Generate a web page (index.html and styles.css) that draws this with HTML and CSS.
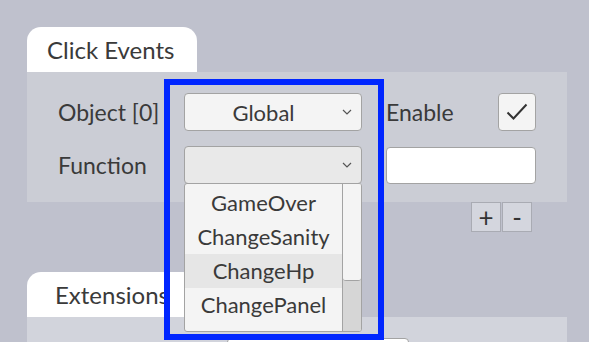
FILE: index.html
```html
<!DOCTYPE html>
<html lang="en">
<head>
  <meta charset="UTF-8">
  <title>Click Events</title>
  <link rel="stylesheet" href="styles.css">
</head>
<body>
  <div class="inspector">
    <div class="tab">Click Events</div>
    <div class="panel">
      <div class="row">
        <span class="label">Object [0]</span>
        <div class="select">
          <span>Global</span>
          <svg class="chevron" width="10" height="6" viewBox="0 0 10 6"><path d="M1 1l4 4 4-4" fill="none" stroke="#555" stroke-width="1.2"/></svg>
        </div>
        <span class="label enable">Enable</span>
        <div class="check">
          <svg width="22" height="18" viewBox="0 0 22 18"><path d="M1.5 9.5l6 6L20.5 1.5" fill="none" stroke="#333" stroke-width="2"/></svg>
        </div>
      </div>
      <div class="row">
        <span class="label">Function</span>
        <div class="select active">
          <span></span>
          <svg class="chevron" width="10" height="6" viewBox="0 0 10 6"><path d="M1 1l4 4 4-4" fill="none" stroke="#555" stroke-width="1.2"/></svg>
        </div>
        <div class="field"></div>
      </div>
    </div>
    <div class="tools">
      <button class="tool">+</button>
      <button class="tool">-</button>
    </div>
    <div class="tab second">Extensions</div>
    <div class="panel lower">
      <div class="field small"></div>
    </div>
  </div>

  <!-- open popup for the Function select -->
  <div class="highlight"></div>
  <div class="menu">
    <ul class="options">
      <li>GameOver</li>
      <li>ChangeSanity</li>
      <li class="hover">ChangeHp</li>
      <li>ChangePanel</li>
      <li>PlayOneshot</li>
    </ul>
    <div class="scrollbar"><div class="thumb"></div></div>
  </div>
</body>
</html>
```

FILE: styles.css
```css
body {
  margin: 0;
  background: #bfc1cd;
  font-family: 'Lato', sans-serif;
  color: #3a3a3a;
  overflow: hidden;
}
.inspector {
  width: 540px;
  padding: 27px 0 0 27px;
}
.tab {
  width: 150px;
  height: 45px;
  padding-left: 20px;
  background: white;
  border-radius: 14px 14px 0 0;
  font-size: 24px;
  line-height: 45px;
}
.tab.second {
  padding-left: 28px;
  width: 142px;
}
.panel {
  background: #cbcdd5;
  height: 130px;
  padding: 21px 0 0 31px;
  box-sizing: border-box;
}
.row {
  display: flex;
  align-items: center;
  height: 38px;
  margin-bottom: 15px;
}
.label {
  width: 126px;
  font-size: 23px;
}
.label.enable {
  width: 112px;
  margin-left: 24px;
}
.select {
  width: 178px;
  height: 38px;
  box-sizing: border-box;
  display: flex;
  align-items: center;
  padding: 0 9px 0 0;
  background: #f4f4f4;
  border: 1px solid #a3a3a3;
  border-radius: 4px;
  font-size: 22px;
}
.select span {
  flex: 1;
  text-align: center;
}
.select.active {
  background: #e9e9e9;
}
.check {
  width: 38px;
  height: 38px;
  box-sizing: border-box;
  display: flex;
  align-items: center;
  justify-content: center;
  background: #f4f4f4;
  border: 1px solid #a3a3a3;
  border-radius: 4px;
}
.field {
  width: 150px;
  height: 37px;
  margin-left: 24px;
  box-sizing: border-box;
  background: white;
  border: 1px solid #a3a3a3;
  border-radius: 4px;
}
.tools {
  display: flex;
  justify-content: flex-end;
  padding-right: 35px;
  height: 70px;
}
.tool {
  width: 30px;
  height: 30px;
  padding: 0;
  margin-left: 1px;
  background: #d4d6de;
  border: 1px solid #a9abb3;
  color: #333;
  font-family: 'Lato', sans-serif;
  font-size: 26px;
  line-height: 26px;
}
.lower {
  height: 60px;
  background: #d2d4dc;
  padding: 21px 0 0 0;
}
.field.small {
  margin-left: 200px;
  width: 182px;
  background: white;
}
.highlight {
  position: absolute;
  left: 164px;
  top: 79px;
  width: 208px;
  height: 249px;
  border: 6px solid #0026ff;
}
.menu {
  position: absolute;
  left: 184px;
  top: 183px;
  width: 178px;
  height: 149px;
  box-sizing: border-box;
  display: flex;
  background: #f4f4f4;
  border: 1px solid #a3a3a3;
  border-radius: 3px;
  overflow: hidden;
}
.options {
  flex: 1;
  list-style: none;
  margin: 0;
  padding: 2px 0 0;
}
.options li {
  height: 34px;
  line-height: 34px;
  text-align: center;
  font-size: 22px;
}
.options li.hover {
  background: #e6e6e6;
}
.scrollbar {
  width: 18px;
  background: #d6d6d6;
  border-left: 1px solid #a3a3a3;
}
.thumb {
  height: 96px;
  background: #f4f4f4;
  border-bottom: 1px solid #a3a3a3;
  border-radius: 0 0 3px 3px;
}
```
